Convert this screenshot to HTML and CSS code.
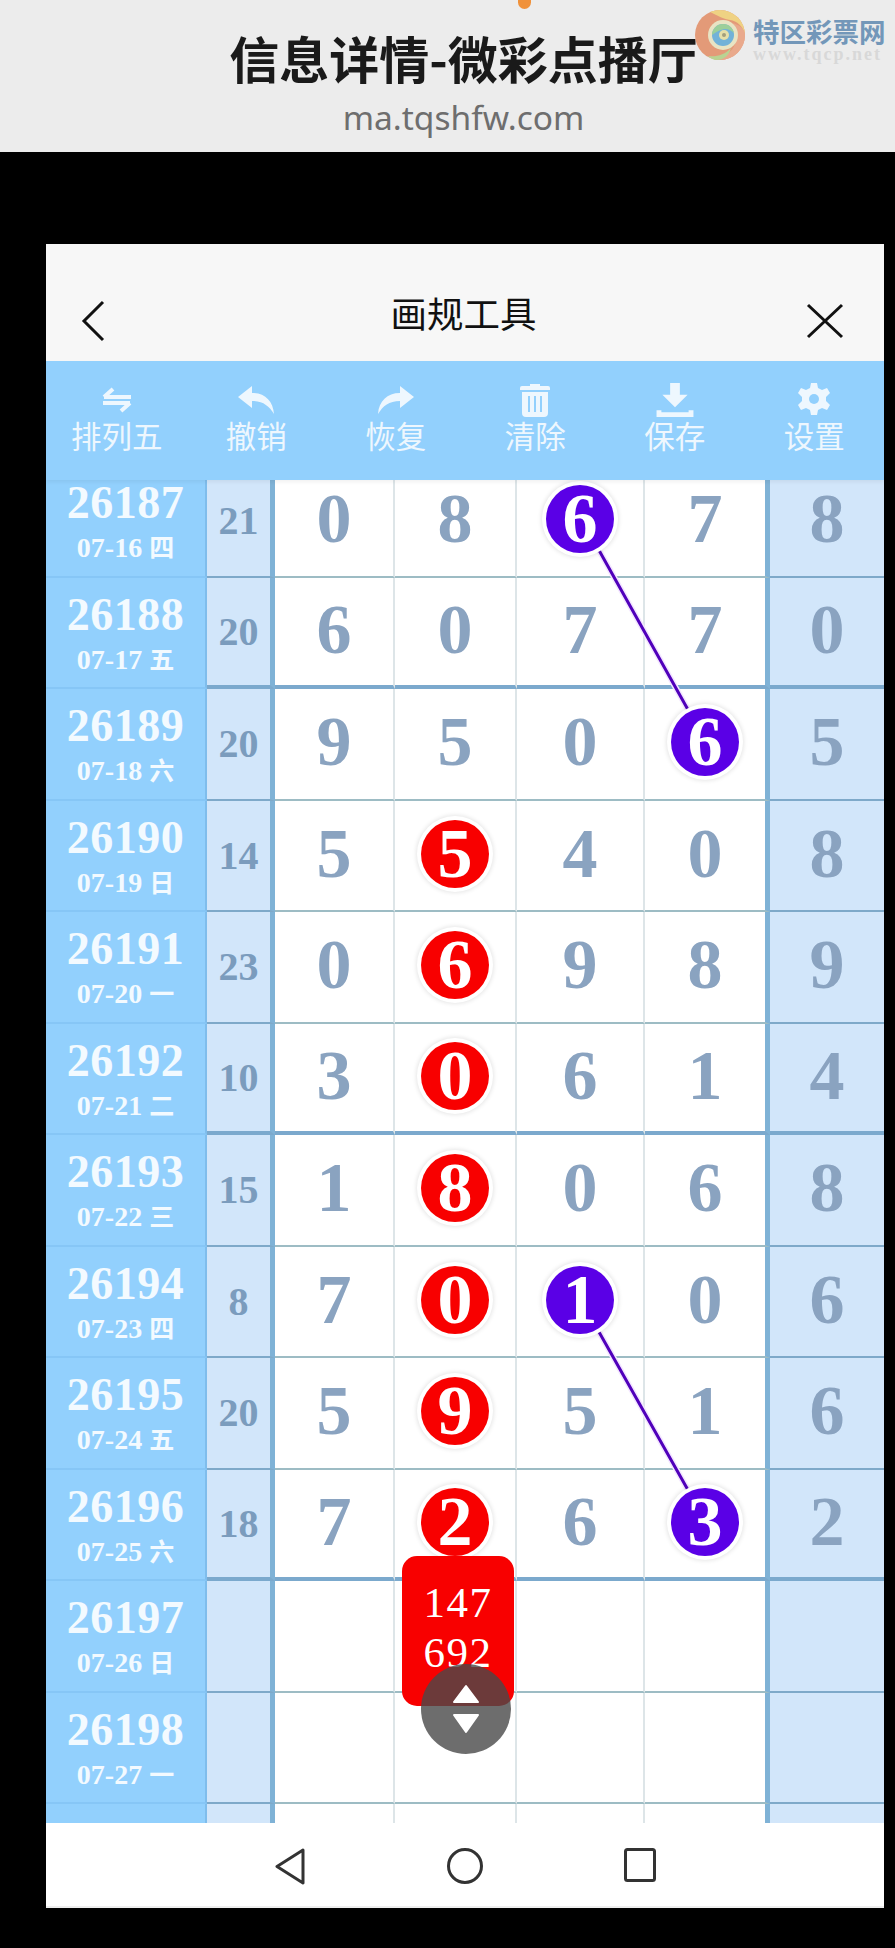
FILE: index.html
```html
<!DOCTYPE html>
<html lang="zh-CN">
<head>
  <meta charset="UTF-8" />
  <title>信息详情-微彩点播厅</title>
  <link rel="stylesheet" href="styles.css">
</head>
<body>
  <header class="page-head">
    <div class="notch"></div>
    <h1>信息详情-微彩点播厅</h1>
    <p class="domain">ma.tqshfw.com</p>
    <div class="mark">
      <svg class="mark-logo" viewBox="0 0 52 52" width="52" height="52">
        <circle cx="26" cy="26" r="25" fill="#e39a78"/>
        <path d="M26 1a25 25 0 0 1 25 25c-2-9-8-14-15-15-6-1-12-4-20-8 3-1 6-2 10-2z" fill="#efd283"/>
        <path d="M51 26a25 25 0 0 1-25 25c-5 0-9-2-12-4 12 3 24-2 27-12 2-6 2-14-3-21 8 2 13 6 13 12z" fill="#e9a98c"/>
        <path d="M14 47c8 1 17-1 23-8-2 8-8 12-14 12-4 0-7-2-9-4z" fill="#b9d392"/>
        <circle cx="29" cy="26" r="15" fill="#e8e4c4"/>
        <circle cx="29" cy="26" r="11" fill="#72b2d8"/>
        <path d="M18 26a11 11 0 0 1 11-11c6 0 10 4 11 9-4-4-9-5-13-3-4 1-6 3-9 5z" fill="#9ccf9a"/>
        <circle cx="30" cy="26" r="5" fill="#e6dfa8"/>
        <circle cx="30" cy="26" r="2" fill="#a39f7c"/>
      </svg>
      <div class="mark-text">
        <div class="mark-name">特区彩票网</div>
        <div class="mark-url">www.tqcp.net</div>
      </div>
    </div>
  </header>

  <main class="app">
    <div class="title-bar">
      <svg class="title-icon" viewBox="0 0 24 42" width="24" height="42">
        <path d="M22 2 3 21l19 19" fill="none" stroke="#111" stroke-width="3"/>
      </svg>
      <h2>画规工具</h2>
      <svg class="title-icon" viewBox="0 0 38 36" width="38" height="36">
        <path d="M2 2l34 32M36 2 2 34" fill="none" stroke="#111" stroke-width="3"/>
      </svg>
    </div>

    <nav class="tools">
      <div class="tool">
        <svg viewBox="0 0 32 26" width="32" height="26">
          <path d="M3 10h27M3 10l9-8M2 16h27M29 16l-9 8" fill="none" stroke="currentColor" stroke-width="4"/>
        </svg>
        <span>排列五</span>
      </div>
      <div class="tool">
        <svg viewBox="0 0 36 28" width="36" height="28">
          <path d="M0 11 14 0v7c13 0 21 8 22 21-5-8-11-13-22-13v7z" fill="currentColor"/>
        </svg>
        <span>撤销</span>
      </div>
      <div class="tool">
        <svg viewBox="0 0 36 28" width="36" height="28">
          <path d="M36 11 22 0v7C9 7 1 15 0 28c5-8 11-13 22-13v7z" fill="currentColor"/>
        </svg>
        <span>恢复</span>
      </div>
      <div class="tool">
        <svg viewBox="0 0 30 34" width="30" height="34">
          <path d="M10 3V1h10v2h8q2 0 2 2v2H0V5q0-2 2-2zM2 9h26v21q0 4-4 4H6q-4 0-4-4z" fill="currentColor"/>
          <path d="M9 13v16M15 13v16M21 13v16" stroke="#92d0fd" stroke-width="2"/>
        </svg>
        <span>清除</span>
      </div>
      <div class="tool">
        <svg viewBox="0 0 38 35" width="38" height="35">
          <path d="M14 0h10v12h8L19 25 6 12h8zM0 28h5v2h28v-2h5v7H0z" fill="currentColor"/>
        </svg>
        <span>保存</span>
      </div>
      <div class="tool">
        <svg viewBox="0 0 34 34" width="34" height="34">
          <path d="M14 0h6l1 5 4 2 5-2 3 5-4 4v4l4 4-3 5-5-2-4 2-1 5h-6l-1-5-4-2-5 2-3-5 4-4v-4L1 10l3-5 5 2 4-2z" fill="currentColor"/>
          <circle cx="17" cy="16" r="5" fill="#92d0fd"/>
        </svg>
        <span>设置</span>
      </div>
    </nav>

    <section class="board">
      <div class="rows">
        <div class="row"><div class="issue"><b>26187</b><small>07-16 <i>四</i></small></div><div class="sum">21</div><div class="num">0</div><div class="num">8</div><div class="num"><em class="ball purple">6</em></div><div class="num last">7</div><div class="num side">8</div></div>
        <div class="row heavy"><div class="issue"><b>26188</b><small>07-17 <i>五</i></small></div><div class="sum">20</div><div class="num">6</div><div class="num">0</div><div class="num">7</div><div class="num last">7</div><div class="num side">0</div></div>
        <div class="row"><div class="issue"><b>26189</b><small>07-18 <i>六</i></small></div><div class="sum">20</div><div class="num">9</div><div class="num">5</div><div class="num">0</div><div class="num last"><em class="ball purple">6</em></div><div class="num side">5</div></div>
        <div class="row"><div class="issue"><b>26190</b><small>07-19 <i>日</i></small></div><div class="sum">14</div><div class="num">5</div><div class="num"><em class="ball red">5</em></div><div class="num">4</div><div class="num last">0</div><div class="num side">8</div></div>
        <div class="row"><div class="issue"><b>26191</b><small>07-20 <i>一</i></small></div><div class="sum">23</div><div class="num">0</div><div class="num"><em class="ball red">6</em></div><div class="num">9</div><div class="num last">8</div><div class="num side">9</div></div>
        <div class="row heavy"><div class="issue"><b>26192</b><small>07-21 <i>二</i></small></div><div class="sum">10</div><div class="num">3</div><div class="num"><em class="ball red">0</em></div><div class="num">6</div><div class="num last">1</div><div class="num side">4</div></div>
        <div class="row"><div class="issue"><b>26193</b><small>07-22 <i>三</i></small></div><div class="sum">15</div><div class="num">1</div><div class="num"><em class="ball red">8</em></div><div class="num">0</div><div class="num last">6</div><div class="num side">8</div></div>
        <div class="row"><div class="issue"><b>26194</b><small>07-23 <i>四</i></small></div><div class="sum">8</div><div class="num">7</div><div class="num"><em class="ball red">0</em></div><div class="num"><em class="ball purple">1</em></div><div class="num last">0</div><div class="num side">6</div></div>
        <div class="row"><div class="issue"><b>26195</b><small>07-24 <i>五</i></small></div><div class="sum">20</div><div class="num">5</div><div class="num"><em class="ball red">9</em></div><div class="num">5</div><div class="num last">1</div><div class="num side">6</div></div>
        <div class="row heavy"><div class="issue"><b>26196</b><small>07-25 <i>六</i></small></div><div class="sum">18</div><div class="num">7</div><div class="num"><em class="ball red">2</em></div><div class="num">6</div><div class="num last"><em class="ball purple">3</em></div><div class="num side">2</div></div>
        <div class="row"><div class="issue"><b>26197</b><small>07-26 <i>日</i></small></div><div class="sum"></div><div class="num"></div><div class="num"></div><div class="num"></div><div class="num last"></div><div class="num side"></div></div>
        <div class="row"><div class="issue"><b>26198</b><small>07-27 <i>一</i></small></div><div class="sum"></div><div class="num"></div><div class="num"></div><div class="num"></div><div class="num last"></div><div class="num side"></div></div>
        <div class="row"><div class="issue"></div><div class="sum"></div><div class="num"></div><div class="num"></div><div class="num"></div><div class="num last"></div><div class="num side"></div></div>
      </div>

      <svg class="links" viewBox="0 0 838 1343" width="838" height="1343">
        <path d="M535 38 660 262M535 820 660 1042" fill="none" stroke="#f3e6ff" stroke-width="6"/>
        <path d="M535 38 660 262M535 820 660 1042" fill="none" stroke="#5000bb" stroke-width="3"/>
      </svg>

      <div class="tip">147<br>692</div>
      <div class="updown">
        <svg viewBox="0 0 28 52" width="28" height="52">
          <path d="M14 3 26 19H2zM2 32h24L14 49z" fill="#fff" stroke="#fff" stroke-width="2" stroke-linejoin="round"/>
        </svg>
      </div>
    </section>

    <footer class="sys-nav">
      <svg viewBox="0 0 32 37" width="32" height="37">
        <path d="M29 2 3 18.500 29 35z" fill="none" stroke="#333" stroke-width="3" stroke-linejoin="round"/>
      </svg>
      <svg viewBox="0 0 36 36" width="36" height="36">
        <circle cx="18" cy="18" r="16.500" fill="none" stroke="#333" stroke-width="3"/>
      </svg>
      <svg viewBox="0 0 32 34" width="32" height="34">
        <rect x="1.500" y="1.500" width="29" height="31" rx="2" fill="none" stroke="#333" stroke-width="3"/>
      </svg>
    </footer>
  </main>
</body>
</html>
```

FILE: styles.css
```css
* {
  box-sizing: border-box;
}
body {
  margin: 0;
  min-height: 1948px;
  background-color: #000;
  font-family: "Noto Sans CJK SC", "Noto Sans", sans-serif;
  overflow: hidden;
}

/* grey page header */
.page-head {
  position: relative;
  height: 152px;
  padding-left: 32px;
  background-color: #ececec;
  text-align: center;
}
.page-head h1 {
  margin: 0;
  padding-top: 22px;
  font-size: 50px;
  line-height: 70px;
  font-weight: 700;
  color: #1a1a1a;
}
.domain {
  margin: 0;
  padding-top: 3px;
  font-family: "Noto Sans", sans-serif;
  font-size: 33.500px;
  line-height: 44px;
  color: #6e6e6e;
}
.notch {
  position: absolute;
  left: 518px;
  top: 0;
  width: 13px;
  height: 9px;
  background-color: #f0913a;
  border-radius: 0 0 7px 7px;
}
.mark {
  position: absolute;
  left: 694px;
  top: 9px;
  display: flex;
  gap: 7px;
  text-align: left;
}
.mark-text {
  padding-top: 7px;
}
.mark-name {
  font-size: 26.500px;
  line-height: 30px;
  font-weight: 700;
  color: #7397b9;
  white-space: nowrap;
}
.mark-url {
  font-family: "Liberation Serif", serif;
  font-size: 18px;
  line-height: 17px;
  font-weight: 700;
  letter-spacing: 2px;
  color: #d8d8d8;
}

/* phone window */
.app {
  width: 838px;
  height: 1664px;
  margin: 92px 0 0 46px;
  background-color: #fff;
  display: flex;
  flex-direction: column;
}
.title-bar {
  height: 117px;
  padding: 37px 40px 0 35px;
  background-color: #f7f7f7;
  display: flex;
  justify-content: space-between;
  align-items: center;
}
.title-bar h2 {
  margin: 0 0 0 16px;
  font-size: 36.500px;
  font-weight: 400;
  line-height: 44px;
  color: #111;
  position: relative;
  top: -8px;
}
.tools {
  position: relative;
  z-index: 5;
  height: 119px;
  padding-left: 1px;
  background-color: #92d0fd;
  box-shadow: 0 2px 4px rgba(0, 0, 0, 0.06);
  display: flex;
}
.tool {
  flex: 1;
  padding-top: 22px;
  display: flex;
  flex-direction: column;
  align-items: center;
  color: #eef7fe;
}
.tool svg {
  height: 34px;
  flex: none;
}
.tool span {
  font-size: 30.500px;
  line-height: 36px;
}

/* number table */
.board {
  position: relative;
  height: 1343px;
  overflow: hidden;
}
.rows {
  margin-top: -14px;
}
.row {
  display: grid;
  grid-template-columns: 161px 68px 120px 122px 128px 125px 114px;
  height: 111.500px;
}
.row > div {
  border-bottom: 2px solid #9dbcc4;
  display: flex;
  align-items: center;
  justify-content: center;
  font-family: "Liberation Serif", "Noto Sans CJK SC", serif;
  font-weight: 700;
}
.row.heavy > div {
  border-bottom: 4px solid #7ba9cd;
}
.row > .issue,
.row.heavy > .issue {
  flex-direction: column;
  padding-top: 7px;
  background-color: #92d0fd;
  border-right: 2px solid #7fbdec;
  border-bottom: 2px solid #86c6f6;
  color: #f3faff;
}
.issue b {
  font-size: 46px;
  line-height: 44px;
  letter-spacing: 0.500px;
}
.issue small {
  font-size: 28px;
  line-height: 36px;
  margin-top: 5px;
}
.issue i {
  font-style: normal;
  font-size: 25px;
}
.row > .sum {
  background-color: #d2e6fa;
  border-right: 5px solid #7fb2d6;
  font-size: 40px;
  color: #7b9cbd;
  border-bottom-color: #7ea9c9;
}
.num {
  border-right: 2px solid #dde5e8;
  font-size: 70px;
  color: #8aa3c0;
  padding-bottom: 3px;
}
.row > .last {
  border-right: 5px solid #7fb2d6;
}
.row > .side {
  background-color: #d2e6fa;
  border-right: 0;
  border-bottom-color: #7ea9c9;
}

.ball {
  position: relative;
  z-index: 2;
  width: 68px;
  height: 68px;
  border-radius: 50%;
  display: flex;
  align-items: center;
  justify-content: center;
  font-style: normal;
  font-size: 70px;
  line-height: 1;
  color: #fff;
  box-shadow: 0 0 0 4px #fff, 0 0 4px 5px rgba(0, 0, 0, 0.1);
}
.red {
  background-color: #f80000;
}
.purple {
  background-color: #5a00e6;
}

/* things lying over the table */
.links {
  position: absolute;
  left: 0;
  top: 0;
  z-index: 1;
}
.tip {
  position: absolute;
  left: 356px;
  top: 1076px;
  z-index: 3;
  width: 112px;
  height: 150px;
  padding-top: 22px;
  background-color: #f80000;
  border-radius: 15px;
  font-family: "Liberation Serif", serif;
  font-size: 43px;
  line-height: 50px;
  letter-spacing: 1.500px;
  text-align: center;
  color: #fff;
}
.updown {
  position: absolute;
  left: 375px;
  top: 1184px;
  z-index: 4;
  width: 90px;
  height: 90px;
  border-radius: 50%;
  background-color: rgba(72, 72, 72, 0.8);
  display: flex;
  align-items: center;
  justify-content: center;
}

.sys-nav {
  position: relative;
  flex: 1;
  background-color: #fff;
  border-bottom: 2px solid #eee;
  padding: 25px 0 0 228px;
  display: flex;
  align-items: flex-start;
  gap: 141px;
}
```
